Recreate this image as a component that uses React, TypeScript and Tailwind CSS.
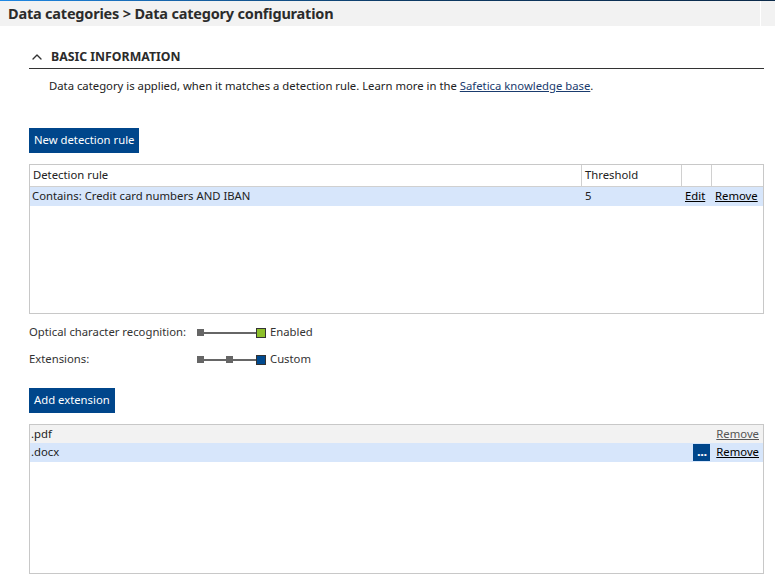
import { ChevronUp } from 'lucide-react';

const font = { fontFamily: '"Noto Sans", "Open Sans", sans-serif' };

function Slider({ steps, color }: { steps: number; color: string }) {
  return (
    <div className="flex items-center">
      <div className="h-[7px] w-[7px] bg-[#666666]" />
      {steps === 3 ? (
        <>
          <div className="h-[2px] w-[22px] bg-[#666666]" />
          <div className="h-[7px] w-[7px] bg-[#666666]" />
          <div className="h-[2px] w-[23px] bg-[#666666]" />
        </>
      ) : (
        <div className="h-[2px] w-[52px] bg-[#666666]" />
      )}
      <div className={`h-[10px] w-[10px] border border-[#333333] ${color}`} />
    </div>
  );
}

export default function App() {
  return (
    <div className="h-[587px] w-[775px] overflow-hidden bg-white text-[11.3px] text-[#222222]" style={font}>
      <div className="h-px bg-gradient-to-r from-[#1e88e5] via-[#0d3b66] to-[#0b2a4a]" />
      <div className="flex h-[25px] bg-[#f2f2f2]">
        <div className="flex flex-1 items-center pl-[8px] text-[14.5px] font-bold tracking-[-0.2px] text-[#2b2b2b]">
          Data categories &gt; Data category configuration
        </div>
        <div className="w-px bg-white" />
        <div className="w-[14px]" />
      </div>

      <div className="px-[29px] pr-[11px]">
        <div className="mt-[22px] flex items-center border-b border-[#333333] pb-[2px]">
          <ChevronUp className="h-[16px] w-[16px] text-[#333333]" strokeWidth={2} />
          <span className="ml-[6px] text-[12.3px] font-bold text-[#2b2b2b]">BASIC INFORMATION</span>
        </div>
        <p className="mt-[9px] pl-[20px]">
          Data category is applied, when it matches a detection rule. Learn more in the{' '}
          <span className="text-[#1a3b6e] underline">Safetica knowledge base</span>.
        </p>

        <button type="button" className="mt-[33px] h-[25px] bg-[#00468b] px-[5px] text-white">
          New detection rule
        </button>

        <div className="mt-[11px] h-[150px] border border-[#c8c8c8]">
          <div className="flex h-[22px] border-b border-[#d0d0d0]">
            <div className="flex flex-1 items-center pl-[3px]">Detection rule</div>
            <div className="flex w-[100px] items-center border-l border-[#d0d0d0] pl-[3px]">Threshold</div>
            <div className="w-[30px] border-l border-[#d0d0d0]" />
            <div className="w-[52px] border-l border-[#d0d0d0]" />
          </div>
          <div className="flex h-[19px] items-center bg-[#d7e6fb]">
            <div className="flex-1 pl-[2px]">Contains: Credit card numbers AND IBAN</div>
            <div className="w-[100px] pl-[4px]">5</div>
            <div className="w-[30px] pl-[4px] text-black underline">Edit</div>
            <div className="w-[52px] pl-[4px] text-black underline">Remove</div>
          </div>
        </div>

        <div className="mt-[10px] flex h-[17px] items-center text-[#333333]">
          <span className="w-[168px]">Optical character recognition:</span>
          <Slider steps={2} color="bg-[#8cbf2a]" />
          <span className="ml-[4px]">Enabled</span>
        </div>
        <div className="mt-[10px] flex h-[17px] items-center text-[#333333]">
          <span className="w-[168px]">Extensions:</span>
          <Slider steps={3} color="bg-[#004a8f]" />
          <span className="ml-[4px]">Custom</span>
        </div>

        <button type="button" className="mt-[20px] h-[25px] bg-[#00468b] px-[5px] text-white">
          Add extension
        </button>

        <div className="mt-[11px] h-[150px] border border-[#c8c8c8]">
          <div className="flex h-[18px] items-center bg-[#f2f2f2]">
            <div className="flex-1 pl-[1px]">.pdf</div>
            <div className="pr-[4px] text-[#555555] underline">Remove</div>
          </div>
          <div className="flex h-[19px] items-center bg-[#d7e6fb]">
            <div className="flex-1 pl-[1px]">.docx</div>
            <div className="mr-[6px] flex h-[17px] w-[17px] items-end justify-center bg-[#00468b] pb-[3px] text-[13px] font-bold leading-none tracking-[-0.5px] text-white">
              ...
            </div>
            <div className="pr-[4px] text-black underline">Remove</div>
          </div>
        </div>
      </div>
    </div>
  );
}
